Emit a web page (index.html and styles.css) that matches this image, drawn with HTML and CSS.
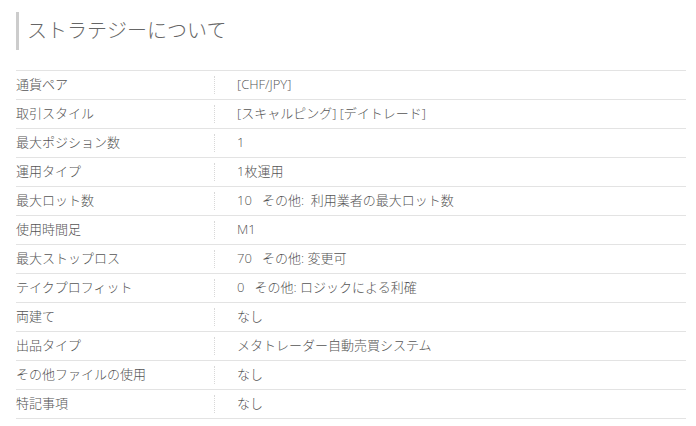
FILE: index.html
```html
<!DOCTYPE html>
<html lang="ja">
<head>
<meta charset="utf-8">
<link rel="stylesheet" href="styles.css">
</head>
<body>
<section class="strategy">
  <h2 class="title">ストラテジーについて</h2>
  <div class="table">
    <div class="row"><div class="label">通貨ペア</div><div class="value">[CHF/JPY]</div></div>
    <div class="row"><div class="label">取引スタイル</div><div class="value">[スキャルピング] [デイトレード]</div></div>
    <div class="row"><div class="label">最大ポジション数</div><div class="value">1</div></div>
    <div class="row"><div class="label">運用タイプ</div><div class="value">1枚運用</div></div>
    <div class="row"><div class="label">最大ロット数</div><div class="value">10&nbsp;&nbsp; その他:&nbsp; 利用業者の最大ロット数</div></div>
    <div class="row"><div class="label">使用時間足</div><div class="value">M1</div></div>
    <div class="row"><div class="label">最大ストップロス</div><div class="value">70&nbsp;&nbsp; その他: 変更可</div></div>
    <div class="row"><div class="label">テイクプロフィット</div><div class="value">0&nbsp;&nbsp; その他: ロジックによる利確</div></div>
    <div class="row"><div class="label">両建て</div><div class="value">なし</div></div>
    <div class="row"><div class="label">出品タイプ</div><div class="value">メタトレーダー自動売買システム</div></div>
    <div class="row"><div class="label">その他ファイルの使用</div><div class="value">なし</div></div>
    <div class="row"><div class="label">特記事項</div><div class="value">なし</div></div>
  </div>
</section>
</body>
</html>
```
FILE: styles.css
```css
html, body {
  margin: 0;
  padding: 0;
  background: #fff;
}
body {
  font-family: "Open Sans", "Noto Sans CJK JP", sans-serif;
  font-weight: 300;
  color: #555;
}
.strategy {
  padding: 12px 10px 0 16px;
}
.title {
  margin: 0;
  font-size: 20px;
  font-weight: 300;
  color: #666;
  line-height: 38px;
  height: 38px;
  border-left: 3px solid #ccc;
  padding-left: 8px;
}
.table {
  margin-top: 20px;
  border-top: 1px solid #e3e3e3;
}
.row {
  display: flex;
  height: 28px;
  border-bottom: 1px solid #e3e3e3;
  font-size: 13px;
}
.label {
  width: 198px;
  line-height: 27px;
}
.value {
  flex: 1;
  margin: 5px 0 5px;
  padding-left: 22px;
  line-height: 17px;
  border-left: 1px dotted #d8d8d8;
}
```
